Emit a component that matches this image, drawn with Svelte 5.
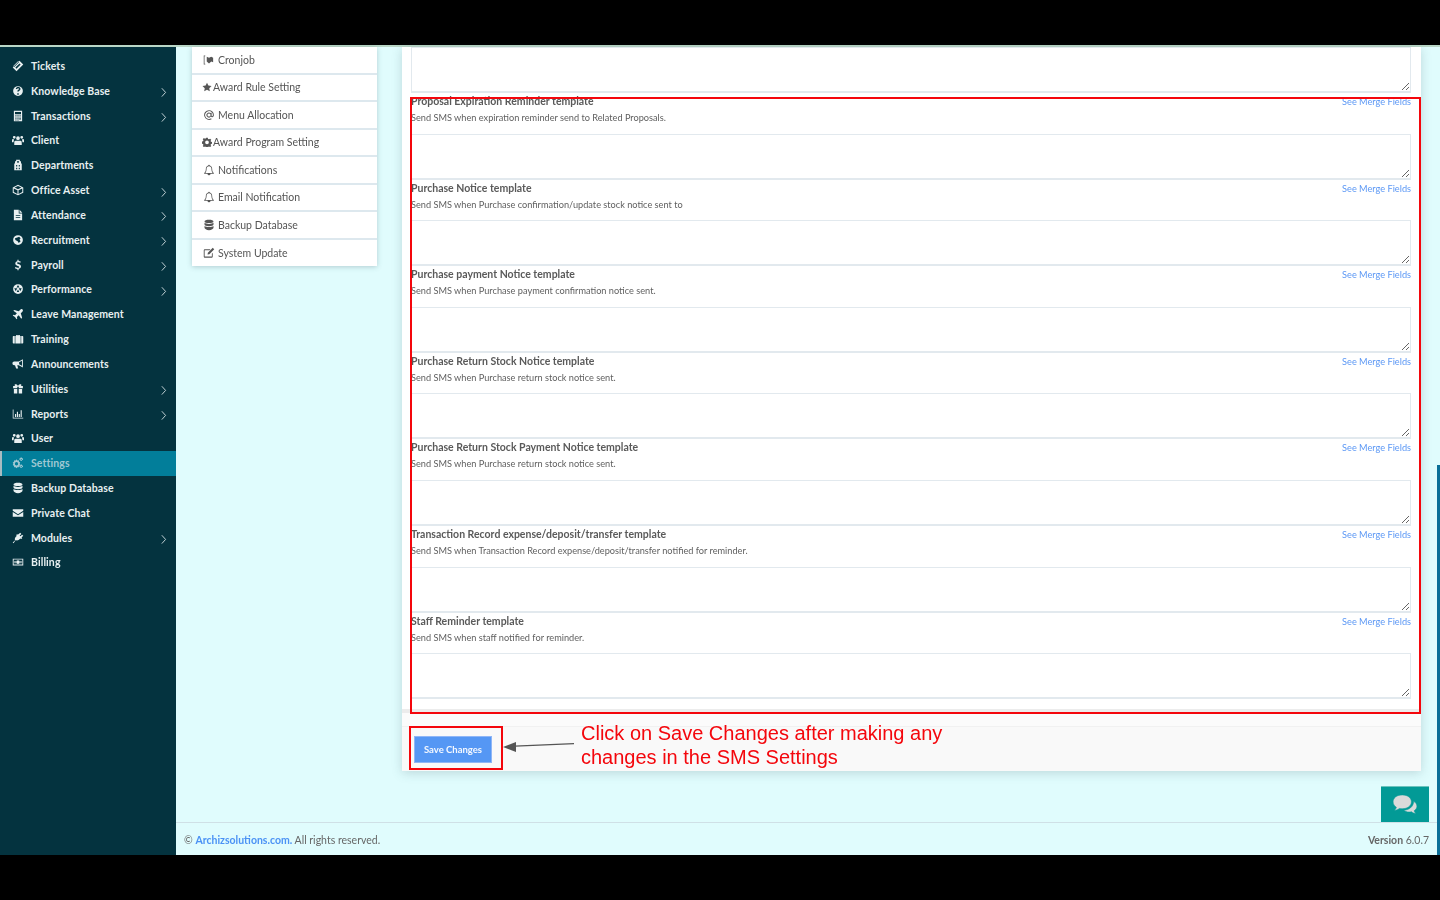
<script>
  const nav = [
    ['ticket', 'Tickets', 0], ['help', 'Knowledge Base', 1], ['calc', 'Transactions', 1], ['users', 'Client', 0],
    ['lock', 'Departments', 0], ['cube', 'Office Asset', 1], ['file', 'Attendance', 1], ['globe', 'Recruitment', 1],
    ['dollar', 'Payroll', 1], ['ball', 'Performance', 1], ['plane', 'Leave Management', 0], ['case', 'Training', 0],
    ['horn', 'Announcements', 0], ['gift', 'Utilities', 1], ['chart', 'Reports', 1], ['users', 'User', 0],
    ['gears', 'Settings', 0], ['db', 'Backup Database', 0], ['mail', 'Private Chat', 0], ['plug', 'Modules', 1], ['money', 'Billing', 0]
  ];
  const menu = [
    ['code', 'Cronjob', 0], ['star', 'Award Rule Setting', 1], ['at', 'Menu Allocation', 0], ['cog', 'Award Program Setting', 1],
    ['bell', 'Notifications', 0], ['bell', 'Email Notification', 0], ['db', 'Backup Database', 0], ['edit', 'System Update', 0]
  ];
  const fields = [
    ['Proposal Expiration Reminder template', 'Send SMS when expiration reminder send to Related Proposals.'],
    ['Purchase Notice template', 'Send SMS when Purchase confirmation/update stock notice sent to'],
    ['Purchase payment Notice template', 'Send SMS when Purchase payment confirmation notice sent.'],
    ['Purchase Return Stock Notice template', 'Send SMS when Purchase return stock notice sent.'],
    ['Purchase Return Stock Payment Notice template', 'Send SMS when Purchase return stock notice sent.'],
    ['Transaction Record expense/deposit/transfer template', 'Send SMS when Transaction Record expense/deposit/transfer notified for reminder.'],
    ['Staff Reminder template', 'Send SMS when staff notified for reminder.']
  ];
  const icons = {
    ticket: 'M10 1 15 6 6 15 1 10ZM10 4.500 4.500 10 6 11.500 11.500 6ZM8 1.800 9.200 3 3 9.200 1.800 8Z',
    help: 'M8 1.500a6.500 6.500 0 1 0 0 13 6.500 6.500 0 0 0 0-13ZM7 11h2v2H7Zm0-2.500c0-2 2.300-2 2.300-3.300 0-1.200-2.300-1.200-2.600.3L5 5c.5-3 6.300-3 6.300.2 0 2-2.300 2.100-2.300 3.300Z',
    calc: 'M2.500 1h11v14h-11ZM4 2.500v3h8v-3ZM4.500 7v1.500H6V7Zm2.700 0v1.500h1.600V7ZM10 7v1.500h1.500V7ZM4.500 10v1.500H6V10Zm2.700 0v1.500h1.600V10ZM10 10v3h1.500v-3ZM4.500 12.500V14H6v-1.500Zm2.700 0V14h1.600v-1.500Z',
    users: 'M8 3a2.500 2.500 0 1 1 0 5 2.500 2.500 0 0 1 0-5ZM3 2.500a1.900 1.900 0 1 1 0 3.800 1.900 1.900 0 0 1 0-3.800Zm10 0a1.900 1.900 0 1 1 0 3.800 1.900 1.900 0 0 1 0-3.800ZM4.500 9h7c1 0 1.500 1 1.500 2.500V14.500H3v-3C3 10 3.500 9 4.500 9ZM0 7h2.800L2 11H0Zm16 0h-2.800l.8 4h2Z',
    lock: 'M5.500 1h5v2h1.500v3h1v9H3V6h1V3h1.500ZM7 2.500V5h2V2.500ZM5.500 8v2H7V8Zm3.500 0v2h1.500V8Zm-3.500 3.500v2H7v-2Zm3.500 0v2h1.500v-2Z',
    cube: 'M8 1 15 4.500v7L8 15l-7-3.500v-7Zm0 1.600L3.500 4.800 8 7l4.500-2.200ZM2.300 6v4.700l5 2.500V8.300Zm11.400 0L8.700 8.300v4.900l5-2.500ZM8 2v13M1 8l14 0',
    file: 'M2.500 1H9v5h4.500v9h-11Zm7.500 0 3.500 3.500V5H10ZM5 8v1h6V8Zm0 2.500v1h6v-1Z',
    globe: 'M8 1.500a6.500 6.500 0 1 0 0 13 6.500 6.500 0 0 0 0-13Zm-1 3 2.500-1 2 2-1.500 2 1.500 2L9 12 7.500 9.500 4.500 8 4 5.500Z',
    dollar: 'M7.200 1h1.600v1.500c1.300.1 2.400.6 3 1.100l-.8 1.500c-.8-.6-1.700-.9-2.600-.9-1.100 0-1.700.5-1.700 1.100 0 1.700 5.300 1 5.300 4.600 0 1.500-1.100 2.700-3.200 3V15H7.200v-1.600c-1.400-.1-2.600-.7-3.400-1.400l.9-1.400c.9.700 1.900 1.100 3 1.100 1.300 0 1.900-.5 1.900-1.200 0-1.800-5.200-1-5.200-4.500 0-1.500 1.100-2.700 2.800-3Z',
    ball: 'M8 1.500a6.500 6.500 0 1 0 0 13 6.500 6.500 0 0 0 0-13Zm0 1.200L6 6h4ZM3 7l2 4 2-4Zm10 0H9l2 4Zm-5 1.500L6.300 12h3.400Z',
    plane: 'M14 2c-1-1-2.300-.5-3 .2L9 4.300 3 2.500 1.800 3.700 6.500 7 4 9.500l-2-.5-1 1 3 2 2 3 1-1-.5-2L9 9.500l3.300 4.700 1.200-1.200-1.800-6 2.100-2c.7-.7 1.200-2 .2-3Z',
    case: 'M5.500 2.500h5V4H14c.6 0 1 .4 1 1v8c0 .6-.4 1-1 1H2c-.6 0-1-.4-1-1V5c0-.6.4-1 1-1h3.500ZM7 3.500V4h2v-.5ZM3.700 4v10h.8V4Zm7.800 0v10h.8V4Z',
    horn: 'M14.500 1.500v11L9 9.500H7l1.200 4.500H5.500L4 9.500H3a2 2 0 0 1 0-5h6Zm-1.200 2.300L9.500 5.700v2.600l3.800 1.900Z',
    gift: 'M8 4c-1-3-5-3-4.500-1 .1.500.4.800 1 1H1.500v3h13V4h-3c.6-.2.900-.5 1-1C13 1 9 1 8 4ZM2.500 8H7v6H2.500ZM9 8h4.500v6H9ZM7 5h2v2H7Z',
    chart: 'M1 2h1v11h13v1H1Zm3 6h1.500v4H4Zm2.500-3H8v7H6.500Zm2.500 3h1.500v4H9Zm2.500-5H13v9h-1.500Z',
    gears: 'M6 3l1.200 1.500 1.800-.2.500 2 1.500.9-.8 1.800.8 1.800-1.500.9-.5 2-1.800-.2L6 15l-1.200-1.500-1.800.2-.5-2L1 10.800l.8-1.800L1 7.200l1.500-.9.500-2 1.800.2ZM6 6.800a2.200 2.200 0 1 0 0 4.400 2.200 2.200 0 0 0 0-4.400ZM13 .5l.5 1.200 1.200.3v1.600l-1.200.4-.5 1.200h-1.500l-.5-1.200-1.200-.4V2l1.200-.3.500-1.200Zm-.7 2.100a.8.800 0 1 0 0 1.600.8.800 0 0 0 0-1.600ZM13 10l.5 1.200 1.200.3v1.600l-1.200.4-.5 1.200h-1.500l-.5-1.200-1.200-.4v-1.600l1.200-.3.500-1.200Zm-.7 2.100a.8.800 0 1 0 0 1.600.8.800 0 0 0 0-1.600Z',
    db: 'M8 1c3.300 0 6 .9 6 2.200S11.300 5.400 8 5.400 2 4.500 2 3.200 4.700 1 8 1ZM2 5c1.200 1 3.500 1.500 6 1.500S12.800 6 14 5v2.300c0 1.200-2.700 2.200-6 2.200S2 8.500 2 7.300ZM2 9.200c1.200 1 3.500 1.400 6 1.400s4.800-.4 6-1.400v2.600C14 13.100 11.300 14.900 8 15c-3.300-.1-6-1.900-6-3.200Z',
    mail: 'M1 3h14v2L8 9.500 1 5Zm0 3.500L8 11l7-4.500V13H1Z',
    plug: 'M11 1l1.500 1.500-2.300 2.300 1 1L13.500 3.500 15 5l-2.300 2.300 1 1-1.500 1-1-.5C9 11 6.500 12 5 10.800L2 15l-1-1 3.200-3C3 9.500 4 7 6.200 5.200L5.700 4.300l1-1.500 1 1Z',
    money: 'M1 3.500h14v9H1Zm1.200 1.200v6.600h11.600V4.700ZM8 5.500a2.500 2.500 0 1 1 0 5 2.500 2.500 0 0 1 0-5ZM3.300 6.500h1.500v3H3.300Zm7.900 0h1.500v3h-1.500Z',
    code: 'M1 2h2v1H2v10h1v1H1ZM5 3.500l3 1.500 3-1.500L13.500 5v6L11 10l-3 2.500L5 10Z',
    star: 'M8 1l2.200 4.600 5 .7-3.600 3.500.9 5L8 12.400l-4.500 2.400.9-5L.8 6.300l5-.7Z',
    at: 'M8 1.500a6.500 6.500 0 1 0 3.500 12l-.7-1.100A5.200 5.200 0 1 1 13.200 8c0 1-.4 1.600-.9 1.600s-.8-.4-.8-1V5h-1.300v.6A3.300 3.300 0 1 0 10.600 10c.4.700 1 1 1.700 1 1.400 0 2.200-1.300 2.200-3A6.500 6.500 0 0 0 8 1.500Zm0 4.400a2.100 2.100 0 1 1 0 4.200 2.100 2.100 0 0 1 0-4.200Z',
    cog: 'M6.700 1h2.600l.4 2 1.500.7 1.800-1.100 1.800 1.800-1.100 1.800.7 1.500 2 .4v2.600l-2 .4-.7 1.500 1.100 1.800-1.800 1.800-1.800-1.100-1.500.7-.4 2H6.700l-.4-2-1.500-.7-1.800 1.100-1.800-1.800 1.100-1.800-.7-1.500-2-.4V7.100l2-.4.7-1.500-1.100-1.800 1.800-1.800 1.800 1.100 1.500-.7ZM8 5.500a3 3 0 1 0 0 6 3 3 0 0 0 0-6Z',
    bell: 'M8 1c.6 0 1 .4 1 1 2 .5 3.200 2.200 3.200 4.200 0 3.300 1.300 5 2.300 5.800v1H10a2 2 0 0 1-4 0H1.500v-1c1-.8 2.300-2.500 2.300-5.800C3.800 4.200 5 2.500 7 2c0-.6.400-1 1-1Zm0 2C6 3 4.800 4.300 4.800 6.200c0 2.500-.7 4.400-1.600 5.800h9.600c-.9-1.400-1.600-3.300-1.600-5.800C11.200 4.300 10 3 8 3Z',
    edit: 'M2.500 3H10L8.800 4.200H2.800c-.4 0-.6.200-.6.600v7.400c0 .4.200.6.600.6h8.400c.4 0 .6-.2.600-.6V9l1.200-1.200v4.700c0 1-.8 1.700-1.700 1.700h-8.600C1.800 14.200 1 13.500 1 12.500v-8C1 3.700 1.700 3 2.500 3ZM13 1l2 2-6.500 6.500L6 10l.5-2.500Z'
  };
</script>

<div class="shot">
  <div class="band"></div>
  <div class="frame">
    <aside class="side">
      {#each nav as [ic, label, more]}
        <div class="nav" class:active={label === 'Settings'}>
          <svg class="ico" viewBox="0 0 16 16"><path d={icons[ic]} fill-rule="evenodd" /></svg>
          <span>{label}</span>
          {#if more}<svg class="chev" viewBox="0 0 8 12"><path d="M2 1.500 6.500 6.500 2 11.500" /></svg>{/if}
        </div>
      {/each}
    </aside>
    <div class="main">
      <div class="cols">
        <div class="menu">
          {#each menu as [ic, label, tight]}
            <div class="mi" class:tight>
              <svg class="mico" viewBox="0 0 16 16"><path d={icons[ic]} fill-rule="evenodd" /></svg>
              <span>{label}</span>
            </div>
          {/each}
        </div>
        <div class="card">
          <div class="body">
            <textarea class="ta" aria-label="Previous template"></textarea>
            {#each fields as [title, desc]}
              <div class="head">
                <div>
                  <div class="title">{title}</div>
                  <div class="desc">{desc}</div>
                </div>
                <a class="merge" href="#merge">See Merge Fields</a>
              </div>
              <textarea class="ta" aria-label={title}></textarea>
            {/each}
          </div>
          <div class="gap"></div>
          <div class="foot"><button class="save">Save Changes</button></div>
        </div>
      </div>
      <div class="chatrow">
        <div class="chat">
          <svg viewBox="0 0 28 24" width="26" height="22"><path class="b1" d="M11 1C5 1 1 4.300 1 8.500c0 2.500 1.400 4.600 3.600 6-.3 1.200-1 2.300-2 3.300 2 0 3.800-.8 5.200-2 1 .2 2.100.3 3.200.3 6 0 10-3.400 10-7.600S17 1 11 1Z"/><path class="b1" d="M23.500 8c2.200 1.300 3.500 3.200 3.500 5.400 0 2-1.200 3.700-3 4.900.2 1 .8 2 1.700 2.900-1.800 0-3.300-.7-4.500-1.800-.9.200-1.800.3-2.700.3-2.400 0-4.500-.8-5.800-2 5.400-.2 10.500-3.400 10.800-9.700Z"/></svg>
        </div>
      </div>
      <footer class="pagefoot">
        <div>© <a href="#home">Archizsolutions.com.</a> All rights reserved.</div>
        <div><b>Version</b> 6.0.7</div>
      </footer>
    </div>
    <div class="thumb"></div>
  </div>
  <div class="band low"></div>

  <div class="note box1"></div>
  <div class="note box2"></div>
  <svg class="arrow" viewBox="0 0 80 12" width="80" height="12"><path d="M71 2.600 12 5.200" stroke="#555" stroke-width="1.300"/><path d="M0 6 13 1v10Z" fill="#555"/></svg>
  <div class="say">Click on Save Changes after making any<br />changes in the SMS Settings</div>
</div>

<style>
  :global(body) { margin: 0; background: #000; }
  .shot { position: relative; width: 1440px; height: 900px; overflow: hidden; font-family: Lato, "Open Sans", sans-serif; }
  .band { height: 45px; background: #000; }
  .band.low { height: 45px; }
  .frame { position: relative; height: 810px; display: flex; background: #e0fcfd; border-top: 2px solid #b9d6c6; box-sizing: border-box; filter: blur(.3px); }
  .side { width: 176px; flex: none; background: #04333f; padding-top: 6.500px; box-sizing: border-box; }
  .nav { height: 24.830px; display: flex; align-items: center; padding-left: 12px; box-sizing: border-box; color: #e8f0f1; font-size: 10.500px; font-weight: 700; letter-spacing: .1px; }
  .nav.active { background: #027e9a; color: #9fc8d2; border-left: 2px solid #a8bcc2; padding-left: 10px; }
  .ico { width: 12px; height: 12px; fill: currentColor; flex: none; margin-right: 7px; }
  .nav span { flex: 1; }
  .chev { width: 7px; height: 10px; margin-right: 9px; margin-top: 3px; fill: none; stroke: #cfdcdf; stroke-width: 1.100; }
  .main { flex: 1; min-width: 0; display: flex; flex-direction: column; }
  .cols { display: flex; align-items: flex-start; height: 739px; padding-left: 16px; gap: 25px; }
  .menu { width: 185px; flex: none; background: #fff; box-shadow: 0 1px 5px rgba(70, 100, 110, .3); font-size: 10.500px; color: #555; }
  .mi { height: 27.500px; display: flex; align-items: center; padding-left: 11px; border-bottom: 2px solid #dde8ee; box-sizing: border-box; }
  .mi:last-child { border-bottom: 0; height: 26.500px; }
  .mi.tight { padding-left: 10px; }
  .mico { width: 12px; height: 12px; fill: #555; flex: none; margin-right: 3px; }
  .mi.tight .mico { width: 10px; height: 10px; margin-right: 1px; }
  .card { width: 1019px; flex: none; background: #fff; box-shadow: 0 2px 10px rgba(60, 90, 100, .22); }
  .body { padding: 0 10px 10px 9px; height: 662px; box-sizing: border-box; }
  .ta { display: block; width: 1000px; height: 46px; padding: 0; margin: 0; border: 1px solid #e2e9ee; border-bottom-width: 2px; background: #fff; box-sizing: border-box; border-radius: 0; outline: 0; }
  .head { height: 40.600px; display: flex; justify-content: space-between; align-items: flex-start; padding-top: 2px; box-sizing: border-box; color: #555; }
  .title { font-size: 10.500px; font-weight: 700; line-height: 13px; color: #5a5a5a; }
  .desc { font-size: 9.200px; line-height: 13px; margin-top: 3px; color: #5f5f5f; }
  .merge { font-size: 9.200px; line-height: 13px; color: #5c98f5; text-decoration: none; }
  .gap { height: 17px; background: linear-gradient(#ececec 0 4px, #fbfbfb 4px); }
  .foot { height: 45px; background: #f9f9f9; padding: 9px 12px; box-sizing: border-box; border-top: 1px solid #f1f1f1; }
  .save { display: block; width: 78px; height: 27px; border: 1px solid #8fb6f7; background: #5597f4; color: #f4f8ff; font: 700 9.500px Lato, sans-serif; padding: 0; }
  .chatrow { height: 36px; margin-top: auto; display: flex; justify-content: flex-end; padding-right: 11px; }
  .chat { width: 48px; height: 36px; background: #029a96; border-top: 1px solid #6cc3be; box-sizing: border-box; display: flex; align-items: center; justify-content: center; }
  .b1 { fill: #dadada; stroke: #029a96; stroke-width: .6; }
  .pagefoot { height: 33px; flex: none; border-top: 1px solid #cfe0e6; display: flex; justify-content: space-between; align-items: center; padding: 2px 11px 0 8px; font-size: 10.500px; color: #666; box-sizing: border-box; }
  .pagefoot a { color: #4b92f5; font-weight: 700; text-decoration: none; }
  .thumb { position: absolute; right: 0; top: 418px; bottom: 0; width: 3px; background: #0a6f98; }
  .note { position: absolute; border: 2px solid #f4060c; box-sizing: border-box; }
  .box1 { left: 410px; top: 97px; width: 1011px; height: 617px; }
  .box2 { left: 409px; top: 726px; width: 94px; height: 44px; }
  .arrow { position: absolute; left: 503px; top: 741px; }
  .say { position: absolute; left: 581px; top: 721px; font: 20px/24px "Liberation Sans", Arial, sans-serif; color: #f4060c; white-space: nowrap; }
</style>
